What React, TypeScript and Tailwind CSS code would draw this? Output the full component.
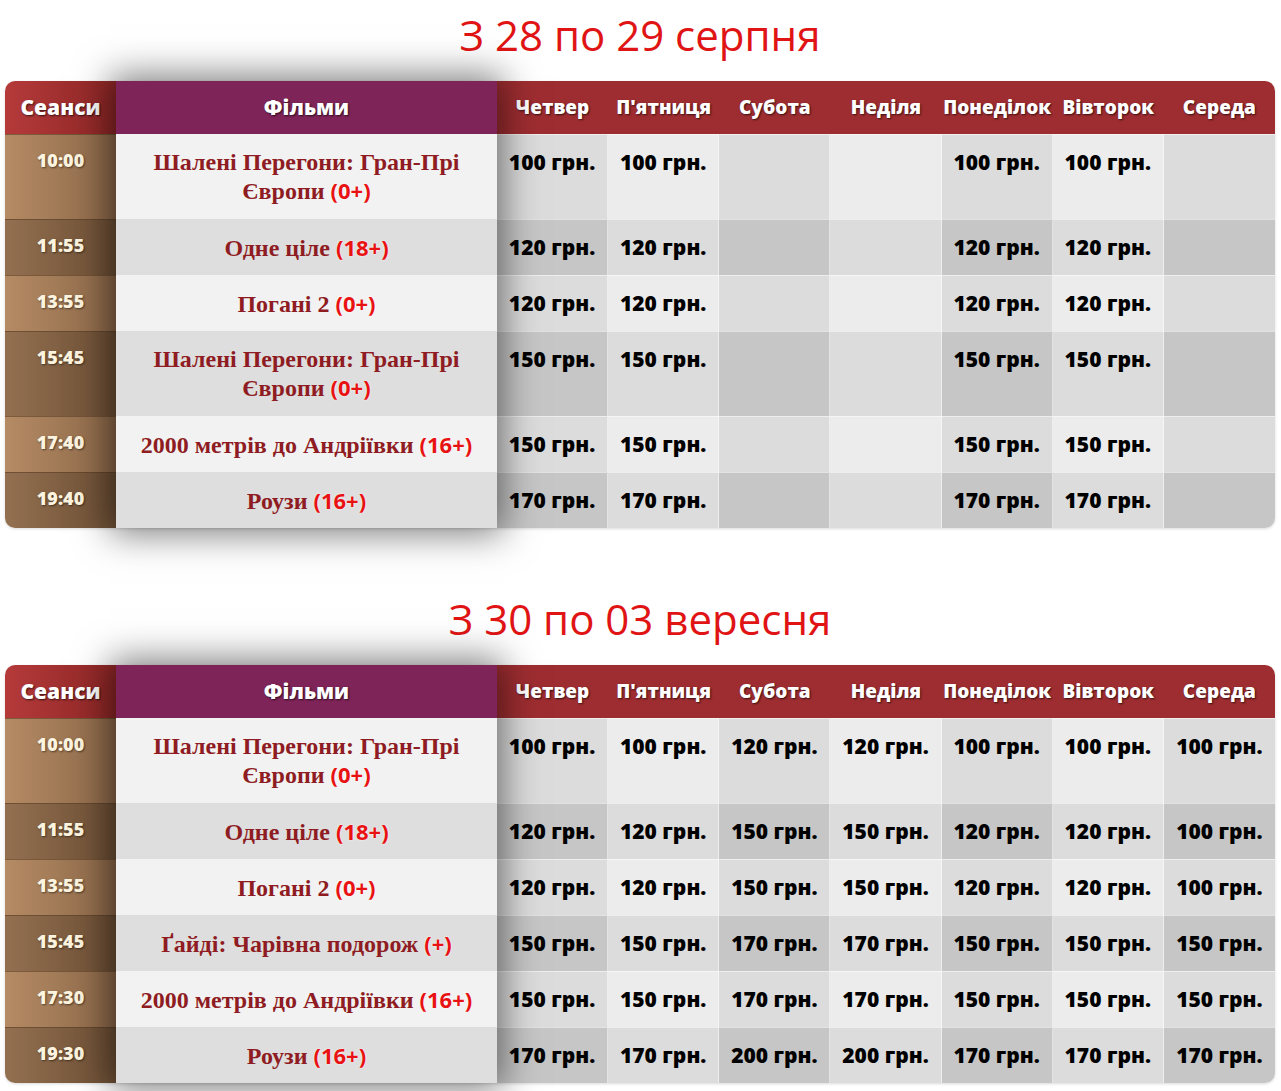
type Row = {
  time: string
  film: string
  rating: string
  tall?: boolean
  prices: string[]
}

type Week = {
  title: string
  rows: Row[]
}

const days = ['Четвер', "П'ятниця", 'Субота', 'Неділя', 'Понеділок', 'Вівторок', 'Середа']

const weeks: Week[] = [
  {
    title: 'З 28 по 29 серпня',
    rows: [
      { time: '10:00', film: 'Шалені Перегони: Гран-Прі Європи', rating: '(0+)', tall: true, prices: ['100', '100', '', '', '100', '100', ''] },
      { time: '11:55', film: 'Одне ціле', rating: '(18+)', prices: ['120', '120', '', '', '120', '120', ''] },
      { time: '13:55', film: 'Погані 2', rating: '(0+)', prices: ['120', '120', '', '', '120', '120', ''] },
      { time: '15:45', film: 'Шалені Перегони: Гран-Прі Європи', rating: '(0+)', tall: true, prices: ['150', '150', '', '', '150', '150', ''] },
      { time: '17:40', film: '2000 метрів до Андріївки', rating: '(16+)', prices: ['150', '150', '', '', '150', '150', ''] },
      { time: '19:40', film: 'Роузи', rating: '(16+)', prices: ['170', '170', '', '', '170', '170', ''] },
    ],
  },
  {
    title: 'З 30 по 03 вересня',
    rows: [
      { time: '10:00', film: 'Шалені Перегони: Гран-Прі Європи', rating: '(0+)', tall: true, prices: ['100', '100', '120', '120', '100', '100', '100'] },
      { time: '11:55', film: 'Одне ціле', rating: '(18+)', prices: ['120', '120', '150', '150', '120', '120', '100'] },
      { time: '13:55', film: 'Погані 2', rating: '(0+)', prices: ['120', '120', '150', '150', '120', '120', '100'] },
      { time: '15:45', film: 'Ґайді: Чарівна подорож', rating: '(+)', prices: ['150', '150', '170', '170', '150', '150', '150'] },
      { time: '17:30', film: '2000 метрів до Андріївки', rating: '(16+)', prices: ['150', '150', '170', '170', '150', '150', '150'] },
      { time: '19:30', film: 'Роузи', rating: '(16+)', prices: ['170', '170', '200', '200', '170', '170', '170'] },
    ],
  },
]

const headText = "font-['Open_Sans',sans-serif] font-extrabold text-white [text-shadow:1px_1px_2px_rgba(0,0,0,0.65)]"

function TimeColumn({ rows }: { rows: Row[] }) {
  return (
    <div className="flex w-[111px] shrink-0 flex-col">
      <div className={`flex h-[53px] items-center justify-center rounded-tl-[10px] bg-gradient-to-r from-[#b53a3a] to-[#8e2626] text-[21px] ${headText}`}>
        Сеанси
      </div>
      {rows.map((r, i) => (
        <div
          key={i}
          className={`flex justify-center border-t border-[#5a3d26]/60 pt-[13px] font-['Open_Sans',sans-serif] text-[18px] font-extrabold leading-[24px] text-[#fdf4df] [text-shadow:1px_1px_2px_rgba(0,0,0,0.5)] ${
            r.tall ? 'h-[85px]' : 'h-[56px]'
          } ${i % 2 === 0 ? 'bg-gradient-to-r from-[#b58b64] to-[#8c6849]' : 'bg-gradient-to-r from-[#937050] to-[#6d4f35]'} ${
            i === rows.length - 1 ? 'rounded-bl-[10px]' : ''
          }`}
        >
          {r.time}
        </div>
      ))}
    </div>
  )
}

function FilmColumn({ rows }: { rows: Row[] }) {
  return (
    <div className="relative z-10 flex w-[381px] shrink-0 flex-col shadow-[0_0_34px_6px_rgba(0,0,0,0.5)]">
      <div className={`flex h-[53px] items-center justify-center bg-[#7e2458] text-[21px] ${headText}`}>Фільми</div>
      {rows.map((r, i) => (
        <div
          key={i}
          className={`flex items-center justify-center px-4 text-center font-['Liberation_Serif',serif] text-[24px] font-bold leading-[28px] text-[#8e1c22] ${
            r.tall ? 'h-[85px]' : 'h-[56px]'
          } ${i % 2 === 0 ? 'bg-[#f2f2f2]' : 'bg-[#dedede]'}`}
        >
          <p>
            {r.film}{' '}
            <span className="font-['Open_Sans',sans-serif] text-[22px] font-bold leading-[28px] text-[#e81212] [text-shadow:0_0_2px_#fff]">{r.rating}</span>
          </p>
        </div>
      ))}
    </div>
  )
}

function DayColumn({ day, index, rows }: { day: string; index: number; rows: Row[] }) {
  const last = index === days.length - 1
  return (
    <div className="flex min-w-0 flex-1 flex-col">
      <div className={`flex h-[53px] items-center justify-center bg-[#9e2d31] text-[19px] ${headText} ${last ? 'rounded-tr-[10px]' : ''}`}>
        {day}
      </div>
      {rows.map((r, i) => {
        const light = i % 2 === 0
        const bg = index % 2 === 0 ? (light ? 'bg-[#dcdcdc]' : 'bg-[#c6c6c6]') : light ? 'bg-[#ececec]' : 'bg-[#dcdcdc]'
        return (
          <div
            key={i}
            className={`flex justify-center border-t border-r border-white/50 pt-[13px] font-['Open_Sans',sans-serif] text-[21px] font-extrabold leading-[28px] text-black ${
              r.tall ? 'h-[85px]' : 'h-[56px]'
            } ${bg} ${last && i === rows.length - 1 ? 'rounded-br-[10px]' : ''} ${last ? 'border-r-0' : ''}`}
          >
            {r.prices[index] ? `${r.prices[index]} грн.` : ''}
          </div>
        )
      })}
    </div>
  )
}

function Schedule({ week }: { week: Week }) {
  return (
    <section>
      <h2 className="flex h-[81px] justify-center pt-[10px] font-['Open_Sans',sans-serif] text-[42px] font-normal leading-[50px] text-[#e01414]">
        {week.title}
      </h2>
      <div className="flex rounded-[10px] shadow-[0_1px_3px_rgba(0,0,0,0.15)]">
        <TimeColumn rows={week.rows} />
        <FilmColumn rows={week.rows} />
        {days.map((d, i) => (
          <DayColumn key={d} day={d} index={i} rows={week.rows} />
        ))}
      </div>
    </section>
  )
}

export default function App() {
  return (
    <div className="min-h-[1091px] bg-white px-[5px] pb-8">
      <div className="flex flex-col gap-[56px] pr-[1px]">
        {weeks.map((w) => (
          <Schedule key={w.title} week={w} />
        ))}
      </div>
    </div>
  )
}
